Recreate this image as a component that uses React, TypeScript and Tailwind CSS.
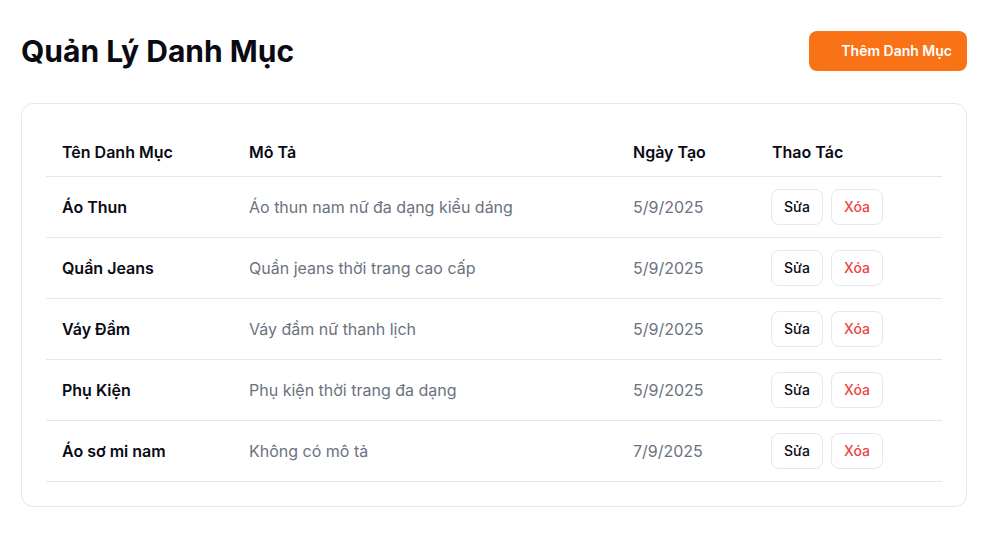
const categories = [
  { name: "Áo Thun", desc: "Áo thun nam nữ đa dạng kiểu dáng", date: "5/9/2025" },
  { name: "Quần Jeans", desc: "Quần jeans thời trang cao cấp", date: "5/9/2025" },
  { name: "Váy Đầm", desc: "Váy đầm nữ thanh lịch", date: "5/9/2025" },
  { name: "Phụ Kiện", desc: "Phụ kiện thời trang đa dạng", date: "5/9/2025" },
  { name: "Áo sơ mi nam", desc: "Không có mô tả", date: "7/9/2025" },
];

export default function App() {
  return (
    <div className="min-h-screen bg-white pl-[21px] pr-[25px] pt-[31px] text-[#0a0a14] font-['Inter',sans-serif]">
      {/* header */}
      <div className="flex items-center justify-between">
        <h1 className="text-[30px] font-bold leading-9">Quản Lý Danh Mục</h1>
        <button className="h-10 rounded-lg bg-[#f97316] pl-[32px] pr-[15px] text-sm font-semibold text-white">
          Thêm Danh Mục
        </button>
      </div>

      {/* table card */}
      <div className="mt-8 rounded-xl border border-[#e5e7eb] p-6">
        <table className="w-full table-fixed border-collapse text-left">
          <thead>
            <tr className="h-[48px] border-b border-[#e5e7eb]">
              <th className="w-[187px] px-4 font-semibold">Tên Danh Mục</th>
              <th className="w-[384px] px-4 font-semibold">Mô Tả</th>
              <th className="w-[139px] px-4 font-semibold">Ngày Tạo</th>
              <th className="px-4 font-semibold">Thao Tác</th>
            </tr>
          </thead>
          <tbody>
            {categories.map((c, i) => (
              <tr key={i} className="h-[61px] border-b border-[#e5e7eb]">
                <td className="px-4 font-semibold">{c.name}</td>
                <td className="px-4 text-[#6b7280]">{c.desc}</td>
                <td className="px-4 text-[#6b7280]">{c.date}</td>
                <td className="pl-[15px] pr-4">
                  <div className="flex gap-2">
                    <button className="h-9 w-[52px] rounded-lg border border-[#e5e7eb] text-sm font-medium">Sửa</button>
                    <button className="h-9 w-[52px] rounded-lg border border-[#e5e7eb] text-sm font-medium text-[#ef4444]">Xóa</button>
                  </div>
                </td>
              </tr>
            ))}
          </tbody>
        </table>
      </div>
    </div>
  );
}
